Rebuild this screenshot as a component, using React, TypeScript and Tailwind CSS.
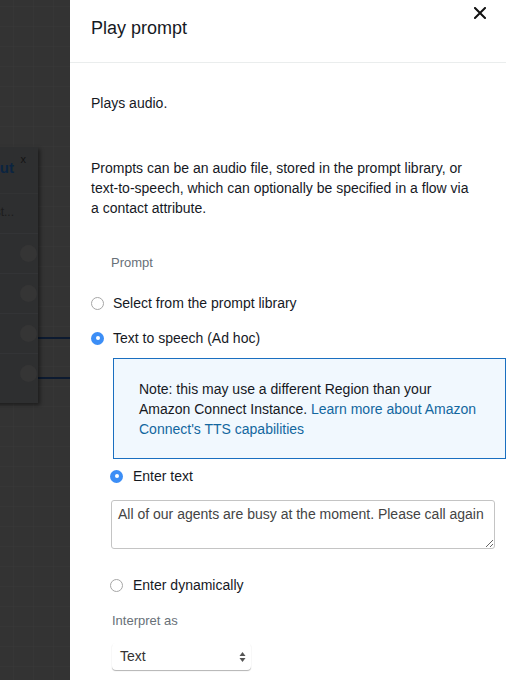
import React from 'react';

function Radio({ checked }: { checked?: boolean }) {
  return checked ? (
    <span className="flex h-[13px] w-[13px] shrink-0 items-center justify-center rounded-full bg-[#3c8ef6]">
      <span className="h-[4px] w-[4px] rounded-full bg-white" />
    </span>
  ) : (
    <span className="h-[13px] w-[13px] shrink-0 rounded-full border border-[#a6a6a6] bg-white" />
  );
}

function Canvas() {
  return (
    <div className="relative w-[70px] shrink-0 overflow-hidden bg-[#333333]">
      <svg className="absolute inset-0" width="70" height="680">
        <defs>
          <pattern id="grid" width="20" height="20" patternUnits="userSpaceOnUse" x="13" y="6">
            <path d="M0 0H20M0 0V20" stroke="#393939" strokeWidth="1" fill="none" />
          </pattern>
        </defs>
        <rect width="70" height="680" fill="url(#grid)" />
        <line x1="36" y1="338" x2="70" y2="338" stroke="#0c1a30" strokeWidth="2" />
        <line x1="36" y1="378" x2="70" y2="378" stroke="#0c1a30" strokeWidth="2" />
      </svg>
      {/* dimmed flow block behind the overlay */}
      <div className="absolute left-[-60px] top-[147px] h-[256px] w-[98px] bg-[#2e2f30] shadow-[2px_2px_4px_rgba(0,0,0,0.45)]">
        <div className="relative h-[46px]">
          <span className="absolute right-[12px] top-[4px] text-[11px] text-[#141414]">x</span>
          <span className="absolute right-[24px] top-[10px] text-[15px] font-bold text-[#0b2440]">out</span>
        </div>
        <div className="h-[40px] border-t border-[#323334] pr-[24px] text-right text-[12px] leading-[36px] text-[#1c1c1c]">
          ast...
        </div>
        {[0, 1, 2, 3].map((i) => (
          <div key={i} className="flex h-[40px] items-center justify-end border-t border-[#333436] pr-[1px]">
            <span className="h-[17px] w-[17px] rounded-full bg-[#353535]" />
          </div>
        ))}
      </div>
    </div>
  );
}

export default function App() {
  return (
    <div className="flex h-[680px] w-[530px] overflow-hidden font-['Liberation_Sans',Arial,sans-serif] text-[14px] text-[#16191f]">
      <Canvas />
      <div className="relative flex-1 bg-white">
        <div className="mr-[24px] flex h-[63px] items-start justify-between border-b border-[#eaeded]">
          <h2 className="pl-[21px] pt-[16px] text-[18px] leading-[24px] text-[#16191f]">Play prompt</h2>
          <button className="mr-[20px] mt-[7px] text-black">
            <svg width="12" height="12" viewBox="0 0 12 12">
              <path d="M1 1L11 11M11 1L1 11" stroke="#111" strokeWidth="2" strokeLinecap="square" />
            </svg>
          </button>
        </div>

        <div className="pl-[21px] pr-[24px]">
          <p className="mt-[30px] leading-[20px]">Plays audio.</p>
          <p className="mt-[45px] pr-[31px] leading-[20px]">
            Prompts can be an audio file, stored in the prompt library, or text-to-speech, which can optionally be
            specified in a flow via a contact attribute.
          </p>

          <div className="mt-[35px] pl-[20px] text-[13px] leading-[20px] text-[#687078]">Prompt</div>

          <label className="mt-[20px] flex h-[20px] items-center gap-[9px]">
            <Radio />
            <span>Select from the prompt library</span>
          </label>
          <label className="mt-[15px] flex h-[20px] items-center gap-[9px]">
            <Radio checked />
            <span>Text to speech (Ad hoc)</span>
          </label>

          <div className="ml-[22px] mt-[10px]">
            <div className="h-[101px] border border-[#1a6fc0] bg-[#f1f8fe] px-[25px] pt-[20px] leading-[20px]">
              Note: this may use a different Region than your Amazon Connect Instance.{' '}
              <a className="text-[#13679f]">Learn more about Amazon Connect's TTS capabilities</a>
            </div>

            <label className="-ml-[3px] mt-[7px] flex h-[20px] items-center gap-[10px]">
              <Radio checked />
              <span>Enter text</span>
            </label>

            <div className="-ml-[2px] mt-[14px] pr-[11px]">
              <textarea
                className="block h-[49px] w-full resize-y rounded-[3px] border border-[#c4c4c4] px-[6px] py-[4px] font-['Liberation_Sans',Arial,sans-serif] text-[14px] leading-[18px] text-[#444]"
                defaultValue="All of our agents are busy at the moment. Please call again"
              />
            </div>

            <label className="-ml-[3px] mt-[26px] flex h-[20px] items-center gap-[10px]">
              <Radio />
              <span>Enter dynamically</span>
            </label>

            <div className="-ml-[1px] mt-[16px] text-[13px] leading-[20px] text-[#687078]">Interpret as</div>

            <div className="-ml-[1px] mt-[12px] flex h-[27px] w-[139px] items-center justify-between rounded-[4px] bg-white pl-[8px] pr-[5px] text-[14px] text-[#333] shadow-[0_1px_1px_rgba(0,0,0,0.3)]">
              <span>Text</span>
              <svg width="7" height="12" viewBox="0 0 7 12">
                <path d="M3.5 1L6.5 5H0.5Z" fill="#555" />
                <path d="M3.5 11L6.5 7H0.5Z" fill="#555" />
              </svg>
            </div>
          </div>
        </div>
      </div>
    </div>
  );
}
